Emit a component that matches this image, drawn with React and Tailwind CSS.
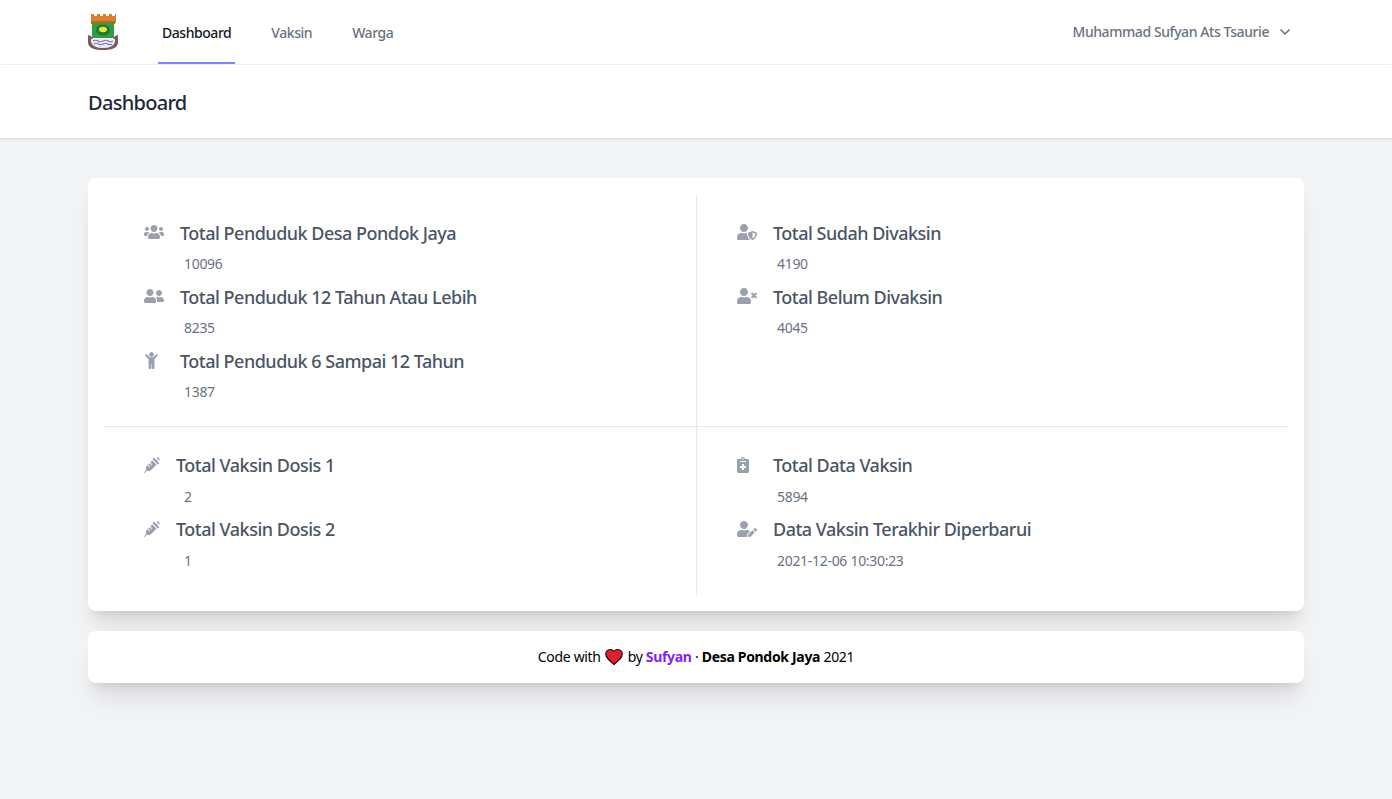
import React from 'react';
import { FaUsers, FaUserFriends, FaChild, FaUserShield, FaUserTimes, FaSyringe, FaNotesMedical, FaUserEdit } from 'react-icons/fa';
import { ChevronDown } from 'lucide-react';

function Logo() {
  return (
    <svg width="30" height="36" viewBox="0 0 30 36" className="block">
      <path d="M3 0h3v2h3V0h3v2h3V0h3v2h3V0h3v2h3V0h1v9H3z" fill="#d9822b" />
      <rect x="3" y="7" width="24" height="3" fill="#b8691f" />
      <rect x="4" y="9" width="22" height="15" fill="#2f9e44" />
      <ellipse cx="15" cy="16" rx="7" ry="5.5" fill="#1f7a34" />
      <ellipse cx="15" cy="15.5" rx="4" ry="2.8" fill="#e8e337" />
      <path d="M0 21l3 1 2 3h20l2-3 3-1v7q0 8-15 8T0 28z" fill="#7b5b55" />
      <path d="M3 25h24v3q-2 6-12 6t-12-6z" fill="#efeaf4" />
      <path d="M5 27q3-1.500 5 0t5 0 5 0 5 0M6 30q2.500-1.500 4.500 0t4.500 0 4.500 0 4.500 0" fill="none" stroke="#7f74b5" strokeWidth="1.200" />
    </svg>
  );
}

function Stat({ icon: Icon, title, value, iconSize = 'text-xl', titleGap = 'w-9', top = false }) {
  return (
    <div className="h-16">
      <div className="flex items-center h-7">
        <span className={`text-gray-400 ${titleGap} flex items-center ${top ? '-mt-[2px]' : ''}`}>
          <Icon className={iconSize} />
        </span>
        <span className="text-[18px] font-medium tracking-[-0.5px] text-gray-600 leading-7">{title}</span>
      </div>
      <div className={`ml-10 text-sm leading-5 tracking-[-0.3px] text-gray-500 ${top ? 'mt-[7px]' : 'mt-2'}`}>{value}</div>
    </div>
  );
}

export default function App() {
  return (
    <div className="min-h-screen bg-gray-100 font-['Noto_Sans','Open_Sans',sans-serif]">
      <nav className="bg-white border-b border-gray-100">
        <div className="mx-auto max-w-7xl px-8 flex justify-between h-16">
          <div className="flex">
            <div className="flex items-center">
              <Logo />
            </div>
            <div className="flex ml-10 gap-8 text-sm font-medium tracking-[-0.45px]">
              <a className="flex items-center px-1 pt-1 border-b-2 border-indigo-400 text-gray-900">Dashboard</a>
              <a className="flex items-center px-1 pt-1 border-b-2 border-transparent text-gray-500">Vaksin</a>
              <a className="flex items-center px-1 pt-1 border-b-2 border-transparent text-gray-500">Warga</a>
            </div>
          </div>
          <div className="flex items-center text-sm font-medium tracking-[-0.42px] text-gray-500 pr-[11px]">
            <span>Muhammad Sufyan Ats Tsaurie</span>
            <ChevronDown className="ml-2 w-4 h-4" strokeWidth={2.5} />
          </div>
        </div>
      </nav>

      <header className="bg-white shadow">
        <div className="mx-auto max-w-7xl px-8 pt-[25px] pb-[23px]">
          <h2 className="font-medium text-xl tracking-[-0.7px] text-gray-800 leading-[25px]">Dashboard</h2>
        </div>
      </header>

      <main className="py-10">
        <div className="mx-auto max-w-7xl px-8">
          <div className="bg-white rounded-lg shadow-xl p-4">
            <div className="grid grid-cols-2">
              <div className="h-[233px] border-b border-gray-200 pl-10 pt-[25px]">
                <Stat top icon={FaUsers} title="Total Penduduk Desa Pondok Jaya" value="10096" />
                <Stat top icon={FaUserFriends} title="Total Penduduk 12 Tahun Atau Lebih" value="8235" />
                <Stat top icon={FaChild} iconSize="text-[17px] -ml-px" title="Total Penduduk 6 Sampai 12 Tahun" value="1387" />
              </div>
              <div className="h-[233px] border-b border-l border-gray-200 pl-10 pt-[25px]">
                <Stat top icon={FaUserShield} title="Total Sudah Divaksin" value="4190" />
                <Stat top icon={FaUserTimes} title="Total Belum Divaksin" value="4045" />
              </div>
              <div className="h-[168px] pl-10 pt-6">
                <Stat icon={FaSyringe} iconSize="text-base" titleGap="w-8" title="Total Vaksin Dosis 1" value="2" />
                <Stat icon={FaSyringe} iconSize="text-base" titleGap="w-8" title="Total Vaksin Dosis 2" value="1" />
              </div>
              <div className="h-[168px] border-l border-gray-200 pl-10 pt-6">
                <Stat icon={FaNotesMedical} iconSize="text-base -ml-[2px]" title="Total Data Vaksin" value="5894" />
                <Stat icon={FaUserEdit} title="Data Vaksin Terakhir Diperbarui" value="2021-12-06 10:30:23" />
              </div>
            </div>
          </div>

          <div className="mt-5 h-[52px] bg-white rounded-lg shadow-xl flex items-center justify-center text-sm tracking-[-0.32px] text-black">
            <span>Code with</span>
            <svg viewBox="0 0 24 24" className="w-[18px] h-[18px] ml-1 mr-[5px]">
              <path d="M12 22C5 16 1 12.500 1 8a6 6 0 0 1 11-3.300A6 6 0 0 1 23 8c0 4.500-4 8-11 14z" fill="#e0202c" stroke="#2a0a0c" strokeWidth="1.500" />
            </svg>
            <span>by&nbsp;</span>
            <span className="font-bold text-violet-600">Sufyan</span>
            <span>&nbsp;·&nbsp;</span>
            <span className="font-bold">Desa Pondok Jaya</span>
            <span>&nbsp;2021</span>
          </div>
        </div>
      </main>
    </div>
  );
}
